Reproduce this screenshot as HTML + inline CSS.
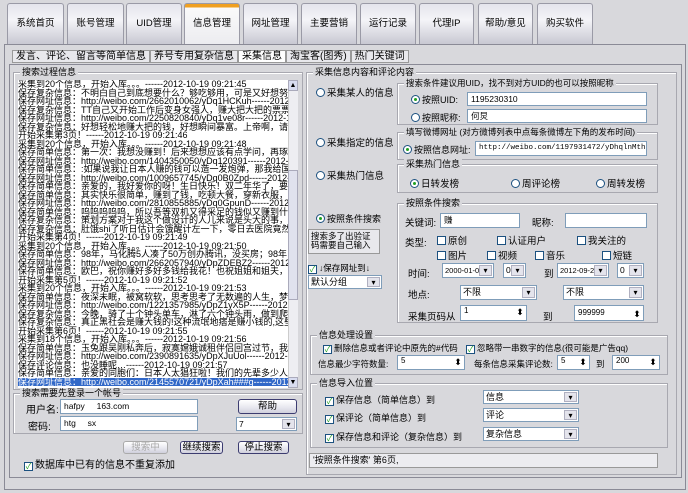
<!DOCTYPE html>
<html><head><meta charset="utf-8">
<style>
*{box-sizing:border-box;margin:0;padding:0}
body{width:688px;height:493px;overflow:hidden;background:#d8d8dc;font-family:"Liberation Sans","Noto Sans CJK SC","WenQuanYi Zen Hei",sans-serif;font-size:9px;color:#000;position:relative}
.a{position:absolute;white-space:nowrap}
.tab{position:absolute;top:3px;height:41px;border:1px solid #9a9aa6;border-bottom:none;border-radius:3px 3px 0 0;background:linear-gradient(#e4e4ec,#f4f4f8 40%,#c8c8d2);text-align:center;line-height:40px;font-size:9.5px}
.tab.on{background:linear-gradient(#f0a020 0,#f0a020 3px,#fafafa 4px,#ececf0);}
.grp{position:absolute;border:1px solid #a8a8b0;box-shadow:inset 1px 1px 0 #fff}
.gt{position:absolute;top:-6px;left:6px;background:#d8d8dc;padding:0 2px;font-size:9px;line-height:11px;white-space:nowrap}
.in{position:absolute;background:#fff;border:1px solid #7f9db9;font-size:8.5px;line-height:12px;padding-left:3px;overflow:hidden;white-space:nowrap}
.sel{position:absolute;background:#fff;border:1px solid #7f9db9;font-size:8.5px;padding-left:2px;overflow:hidden;white-space:nowrap}
.sel:after{content:"▾";position:absolute;right:1px;top:1px;bottom:1px;width:11px;background:#e4e4ec;border:1px solid #b0b0c0;font-size:8px;text-align:center;line-height:10px}
.spin:after{content:"⬍";position:absolute;right:1px;top:1px;bottom:1px;width:10px;font-size:9px;text-align:center}
.r{display:inline-block;width:9px;height:9px;border:1px solid #1c5180;border-radius:50%;background:#fff;vertical-align:-1px;margin-right:2px;position:relative}
.r.c:after{content:"";position:absolute;left:2px;top:2px;width:3px;height:3px;border-radius:50%;background:#21a121}
.cb{display:inline-block;width:9px;height:9px;border:1px solid #1c5180;background:#fff;vertical-align:-1px;margin-right:2px;position:relative;font-size:8px;line-height:7px;color:#21a121;text-align:center}
.btn{position:absolute;border:1px solid #3c3c70;border-radius:3px;background:linear-gradient(#fff,#e6e6ee 60%,#d0d0dc);text-align:center;font-size:9.5px}
.log{position:absolute;left:18px;top:80px;width:270px;height:308px;background:#fff;overflow:hidden;font-size:9px;line-height:8.5px}
.log div{white-space:nowrap;height:8.5px}
.hl{background:#3168c8;color:#fff}
.st span{border:1px solid #999;padding:0 3px;background:#e8e8ec}
</style></head><body>
<div class="tab" style="left:7px;width:57px">系统首页</div>
<div class="tab" style="left:67px;width:57px">账号管理</div>
<div class="tab" style="left:126px;width:56px">UID管理</div>
<div class="tab on" style="left:184px;width:56px">信息管理</div>
<div class="tab" style="left:243px;width:55px">网址管理</div>
<div class="tab" style="left:301px;width:56px">主要营销</div>
<div class="tab" style="left:360px;width:56px">运行记录</div>
<div class="tab" style="left:419px;width:55px">代理IP</div>
<div class="tab" style="left:478px;width:55px">帮助/意见</div>
<div class="tab" style="left:537px;width:56px">购买软件</div>
<div class="a" style="left:4px;top:44px;width:682px;height:446px;border:1px solid #8a8a96;background:#d8d8dc"></div>
<div class="a st" style="left:12px;top:50px;font-size:10px;line-height:13px">
<span>发言、评论、留言等简单信息</span><span>养号专用复杂信息</span><span style="background:#fff">采集信息</span><span>淘宝客(图秀)</span><span>热门关键词</span></div>
<div class="a" style="left:9px;top:64px;width:673px;height:414px;border:1px solid #8a8a96"></div>

<div class="grp" style="left:13px;top:72px;width:290px;height:318px"><span class="gt">搜索过程信息</span></div>
<div class="log">
<div>采集到20个信息，开始入库。。。------2012-10-19 09:21:45</div>
<div>保存复杂信息：不明白自己到底想要什么？够吃够用，可是又好想努力赚</div>
<div>保存网址信息：http://weibo.com/2662010062/yDq1HCKuh------2012-10</div>
<div>保存复杂信息：TT自己又开始工作后变身女强人，赚大把大把的票票，多</div>
<div>保存网址信息：http://weibo.com/2250820840/yDq1ve08r------2012-10</div>
<div>保存复杂信息：好想轻松地赚大把的钱，好想瞬间暴富。上帝啊，请满足</div>
<div>开始采集第3页！------2012-10-19 09:21:46</div>
<div>采集到20个信息，开始入库。。。------2012-10-19 09:21:48</div>
<div>保存简单信息：第一次：我想没赚到！后来想想应该有点学问，再琢磨了</div>
<div>保存网址信息：http://weibo.com/1404350050/yDq120391------2012-10</div>
<div>保存简单信息：:如果说我让日本人赚的钱可以造一发炮弹，那我给国家</div>
<div>保存网址信息：http://weibo.com/1009657745/yDq0B0Zpd------2012-10</div>
<div>保存简单信息：亲爱的，我好爱你的呀！生日快乐！双二年华了，要天天</div>
<div>保存简单信息：其实快乐很简单，赚到了钱，吃顿大餐，穿新衣服，再学</div>
<div>保存网址信息：http://weibo.com/2810855885/yDq0GpunD------2012-10</div>
<div>保存简单信息：呜呜呜呜呜，所以吾等双机又得采足的钱似又赚到什么~</div>
<div>保存复杂信息：策划方案对于我这个做设计的人儿来说是头大的事，就像</div>
<div>保存复杂信息：肚饿shi了听日估计会饿醒计左一下，零日去医院竟然用左</div>
<div>开始采集第4页！------2012-10-19 09:21:49</div>
<div>采集到20个信息，开始入库。。。------2012-10-19 09:21:50</div>
<div>保存简单信息：98年，马化腾5人凑了50万创办腾讯，没买房；98年，史</div>
<div>保存网址信息：http://weibo.com/2662057940/yDpZDEBZ2------2012-10</div>
<div>保存简单信息：欧巴，祝你赚好多好多钱给我花！也祝姐姐和姐夫，快快</div>
<div>开始采集第5页！------2012-10-19 09:21:52</div>
<div>采集到20个信息，开始入库。。。------2012-10-19 09:21:53</div>
<div>保存简单信息：夜深未眠，被窝软软，思考思考了无数遍的人生，梦想。</div>
<div>保存网址信息：http://weibo.com/1221357985/yDpZ1yX5P------2012-10</div>
<div>保存复杂信息：今晚，骑了十个钟头单车，淋了六个钟头雨，做到爬狗用</div>
<div>保存复杂信息：真正黑社会是赚大钱的!这种流氓地痞是赚小钱的,这些小</div>
<div>开始采集第6页！------2012-10-19 09:21:55</div>
<div>采集到18个信息，开始入库。。。------2012-10-19 09:21:56</div>
<div>保存简单信息：玉兔跟吴刚私奔后，寂寞嫦娥诚租伴侣回宫过节，我应聘</div>
<div>保存网址信息：http://weibo.com/2390891635/yDpXJuUol------2012-10</div>
<div>保存评论信息：也没睡呢…------2012-10-19 09:21:57</div>
<div>保存简单信息：亲爱的同胞们：日本人太猖狂啦！我们的先辈多少人死于</div>
<div class="hl">保存网址信息：http://weibo.com/2145570721/yDpXah###g------2012-10</div>
</div>
<div class="a" style="left:288px;top:80px;width:10px;height:308px;background:#eeeef2;border-left:1px solid #ccc"></div>
<div class="a" style="left:288px;top:80px;width:10px;height:11px;background:#d8dcf0;border:1px solid #aab;font-size:7px;text-align:center;line-height:9px">▲</div>
<div class="a" style="left:288px;top:170px;width:10px;height:130px;background:#e0e2ee;border:1px solid #aab"></div>
<div class="a" style="left:288px;top:377px;width:10px;height:11px;background:#d8dcf0;border:1px solid #aab;font-size:7px;text-align:center;line-height:9px">▼</div>

<div class="grp" style="left:13px;top:393px;width:290px;height:41px"><span class="gt">搜索需要先登录一个帐号</span></div>
<div class="a" style="left:26px;top:401px;font-size:10px">用户名:</div>
<div class="in" style="left:60px;top:399px;width:138px;height:15px">hafpy&nbsp;&nbsp;&nbsp;&nbsp;&nbsp;163.com</div>
<div class="a" style="left:28px;top:418px;font-size:10px">密码:</div>
<div class="in" style="left:60px;top:416px;width:138px;height:15px">htg&nbsp;&nbsp;&nbsp;&nbsp;&nbsp;sx</div>
<div class="btn" style="left:238px;top:399px;width:59px;height:15px;line-height:13px">帮助</div>
<div class="sel" style="left:236px;top:417px;width:61px;height:14px;line-height:12px">7</div>
<div class="btn" style="left:123px;top:441px;width:45px;height:13px;line-height:11px;color:#aaa;border-color:#aaa">搜索中</div>
<div class="btn" style="left:180px;top:441px;width:43px;height:13px;line-height:11px">继续搜索</div>
<div class="btn" style="left:238px;top:441px;width:51px;height:13px;line-height:11px">停止搜索</div>
<div class="a" style="left:24px;top:456px;font-size:10px"><span class="cb">✓</span>数据库中已有的信息不重复添加</div>

<div class="grp" style="left:306px;top:72px;width:371px;height:403px"><span class="gt">采集信息内容和评论内容</span></div>
<div class="a" style="left:316px;top:85px;font-size:9.5px"><span class="r"></span>采集某人的信息</div>
<div class="grp" style="left:397px;top:83px;width:261px;height:42px"><span class="gt" style="font-size:8.5px">搜索条件建议用UID，找不到对方UID的也可以按照昵称</span></div>
<div class="a" style="left:411px;top:93px;font-size:9px"><span class="r c"></span>按照UID:</div>
<div class="in" style="left:467px;top:92px;width:180px;height:14px">1195230310</div>
<div class="a" style="left:411px;top:111px;font-size:9px"><span class="r"></span>按照昵称:</div>
<div class="in" style="left:467px;top:109px;width:180px;height:14px">何炅</div>
<div class="a" style="left:316px;top:135px;font-size:9.5px"><span class="r"></span>采集指定的信息</div>
<div class="grp" style="left:397px;top:132px;width:261px;height:28px"><span class="gt" style="font-size:8.5px">填写微博网址 (对方微博列表中点每条微博左下角的发布时间)</span></div>
<div class="a" style="left:403px;top:143px;font-size:9px"><span class="r c"></span>按照信息网址:</div>
<div class="in" style="left:475px;top:141px;width:172px;height:15px;font-family:'Liberation Mono',monospace;font-size:7.5px">http://weibo.com/1197931472/yDhqlnMth</div>
<div class="a" style="left:316px;top:168px;font-size:9.5px"><span class="r"></span>采集热门信息</div>
<div class="grp" style="left:397px;top:164px;width:261px;height:29px"><span class="gt">采集热门信息</span></div>
<div class="a" style="left:410px;top:176px;font-size:9.5px"><span class="r c"></span>日转发榜</div>
<div class="a" style="left:511px;top:176px;font-size:9.5px"><span class="r"></span>周评论榜</div>
<div class="a" style="left:596px;top:176px;font-size:9.5px"><span class="r"></span>周转发榜</div>

<div class="a" style="left:316px;top:212px;font-size:9px"><span class="r c"></span>按照条件搜索</div>
<div class="a" style="left:308px;top:229px;width:72px;height:25px;border:1px solid #999;background:#e8e8ec;font-size:8.5px;line-height:8.5px;padding:2px;white-space:normal">搜索多了出验证码需要自己输入</div>
<div class="a" style="left:308px;top:262px;font-size:8.5px"><span class="cb">✓</span>↓保存网址到↓</div>
<div class="sel" style="left:308px;top:275px;width:74px;height:14px;line-height:12px;font-size:9px">默认分组</div>
<div class="grp" style="left:397px;top:203px;width:261px;height:120px"><span class="gt">按照条件搜索</span></div>
<div class="a" style="left:405px;top:215px;font-size:9.5px">关键词:</div>
<div class="in" style="left:440px;top:213px;width:80px;height:15px">赚</div>
<div class="a" style="left:532px;top:215px;font-size:9.5px">昵称:</div>
<div class="in" style="left:565px;top:213px;width:82px;height:15px"></div>
<div class="a" style="left:405px;top:235px;font-size:9.5px">类型:</div>
<div class="a" style="left:437px;top:233px;font-size:9.5px"><span class="cb"></span>原创</div>
<div class="a" style="left:497px;top:233px;font-size:9.5px"><span class="cb"></span>认证用户</div>
<div class="a" style="left:577px;top:233px;font-size:9.5px"><span class="cb"></span>我关注的</div>
<div class="a" style="left:437px;top:248px;font-size:9.5px"><span class="cb"></span>图片</div>
<div class="a" style="left:487px;top:248px;font-size:9.5px"><span class="cb"></span>视频</div>
<div class="a" style="left:535px;top:248px;font-size:9.5px"><span class="cb"></span>音乐</div>
<div class="a" style="left:602px;top:248px;font-size:9.5px"><span class="cb"></span>短链</div>
<div class="a" style="left:408px;top:266px;font-size:9.5px">时间:</div>
<div class="sel" style="left:442px;top:263px;width:52px;height:15px;line-height:13px;font-size:7.5px">2000-01-01</div>
<div class="sel" style="left:503px;top:263px;width:23px;height:15px;line-height:13px">0</div>
<div class="a" style="left:544px;top:266px;font-size:9.5px">到</div>
<div class="sel" style="left:557px;top:263px;width:52px;height:15px;line-height:13px;font-size:7.5px">2012-09-29</div>
<div class="sel" style="left:617px;top:263px;width:27px;height:15px;line-height:13px">0</div>
<div class="a" style="left:408px;top:287px;font-size:9.5px">地点:</div>
<div class="sel" style="left:460px;top:285px;width:77px;height:15px;line-height:13px;font-size:9px">不限</div>
<div class="sel" style="left:563px;top:285px;width:81px;height:15px;line-height:13px;font-size:9px">不限</div>
<div class="a" style="left:408px;top:309px;font-size:9.5px">采集页码从</div>
<div class="in spin" style="left:460px;top:305px;width:67px;height:16px;line-height:10px;font-size:8px">1</div>
<div class="a" style="left:543px;top:309px;font-size:9.5px">到</div>
<div class="in spin" style="left:574px;top:305px;width:70px;height:16px;line-height:14px;font-size:8px">999999</div>

<div class="grp" style="left:310px;top:335px;width:358px;height:40px"><span class="gt">信息处理设置</span></div>
<div class="a" style="left:323px;top:342px;font-size:8.5px"><span class="cb">✓</span>删除信息或者评论中原先的#代码</div>
<div class="a" style="left:466px;top:342px;font-size:8.5px"><span class="cb">✓</span>忽略带一串数字的信息(很可能是广告qq)</div>
<div class="a" style="left:318px;top:358px;font-size:8.5px">信息最少字符数量:</div>
<div class="in spin" style="left:397px;top:355px;width:68px;height:15px;line-height:10px;font-size:8px">5</div>
<div class="a" style="left:474px;top:358px;font-size:8.5px">每条信息采集评论数:</div>
<div class="in spin" style="left:557px;top:355px;width:33px;height:15px;line-height:10px;font-size:8px">5</div>
<div class="a" style="left:596px;top:358px;font-size:8.5px">到</div>
<div class="in spin" style="left:612px;top:355px;width:48px;height:15px;line-height:10px;font-size:8px">200</div>

<div class="grp" style="left:310px;top:383px;width:358px;height:65px"><span class="gt">信息导入位置</span></div>
<div class="a" style="left:325px;top:393px;font-size:9px"><span class="cb">✓</span>保存信息（简单信息）到</div>
<div class="sel" style="left:483px;top:390px;width:96px;height:14px;line-height:12px;font-size:9px">信息</div>
<div class="a" style="left:325px;top:411px;font-size:9px"><span class="cb">✓</span>保评论（简单信息）到</div>
<div class="sel" style="left:483px;top:408px;width:96px;height:14px;line-height:12px;font-size:9px">评论</div>
<div class="a" style="left:325px;top:430px;font-size:9px"><span class="cb">✓</span>保存信息和评论（复杂信息）到</div>
<div class="sel" style="left:483px;top:427px;width:96px;height:14px;line-height:12px;font-size:9px">复杂信息</div>
<div class="a" style="left:309px;top:453px;width:349px;height:15px;border:1px solid #999;background:#ececf0;font-size:9px;line-height:13px;padding-left:3px">'按照条件搜索' 第6页,</div>
</body></html>
